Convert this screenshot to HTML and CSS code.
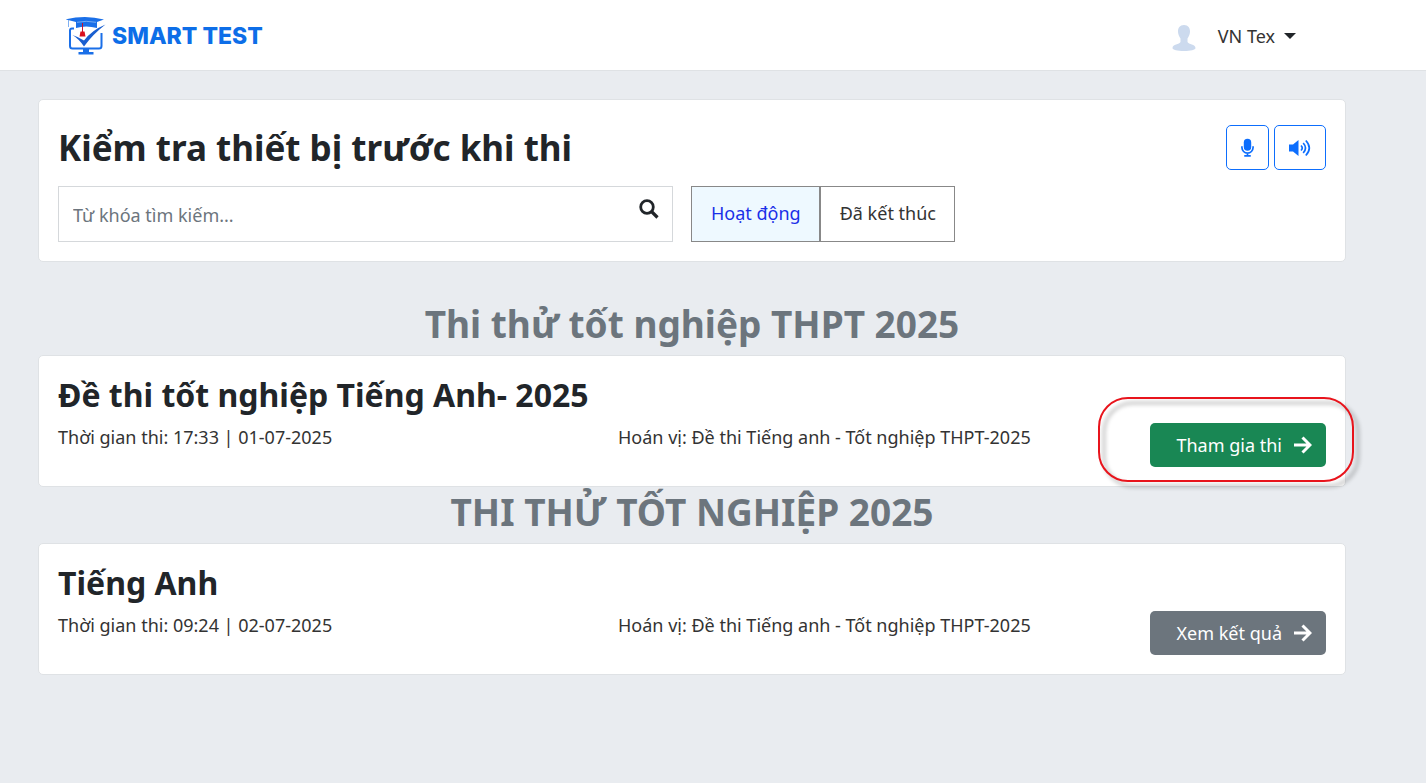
FILE: index.html
```
<!DOCTYPE html>
<html lang="vi">
<head>
<meta charset="UTF-8">
<meta name="viewport" content="width=device-width, initial-scale=1">
<title>Smart Test</title>
<link rel="stylesheet" href="styles.css">
</head>
<body>
<header class="topbar">
  <a class="brand" href="#">
    <svg class="brand-logo" viewBox="0 0 40 40" aria-hidden="true">
      <path d="M8 12.500H6Q4 12.500 4 14.500V30Q4 32.500 6.500 32.500H33Q35.500 32.500 35.500 30V17" fill="none" stroke="#1a6fe8" stroke-width="2"/>
      <path d="M17 33h6v3h4.500v2.500h-15V36H17z" fill="#1a6fe8"/>
      <path d="M-.5 3.500Q19-1.500 38 3.500L31 6v6q-11-3-21 0V6z" fill="#1a6fe8"/>
      <path d="M2.500 4v7" stroke="#7fb0f2" fill="none"/>
      <path d="M11 6.300q9-2 19 0" fill="none" stroke="#8fbcf5" stroke-width=".8"/>
      <path d="M6.500 19q6 2 11.500 5.500Q26 14 39.500 8.500 27 18 18 30.500 13 23 6.500 19z" fill="#1a5fd0"/>
      <path d="M16.500 7v9" stroke="#c8142c" fill="none"/>
      <path d="M14.500 15.500h4l1 5h-6z" fill="#d9101e"/>
    </svg>
    <span>SMART TEST</span>
  </a>
  <button class="user" type="button">
    <svg class="avatar" viewBox="0 0 24 28" aria-hidden="true">
      <path d="M12 1c4.200 0 6.200 3 6 7-.2 3-1.500 5-2.500 6.500V18c1 2.500 8 2 8 6 0 2-5 3-11.500 3S.5 26 .5 24c0-4 7-3.500 8-6v-3.500C7.500 13 6.200 11 6 8c-.2-4 1.800-7 6-7z" fill="#ccdaee"/>
    </svg>
    <span>VN Tex</span>
    <span class="caret"></span>
  </button>
</header>

<main class="page">
  <section class="card">
    <div class="check">
      <h1>Kiểm tra thiết bị trước khi thi</h1>
      <div class="devices">
        <button class="device" type="button" aria-label="Micro">
          <svg width="13" height="20" viewBox="0 0 14 20" aria-hidden="true">
            <rect x="3" y="0" width="8" height="13" rx="4" fill="currentColor"/>
            <path d="M1 8v1.500a6 6 0 0 0 12 0V8M7 15.500V18M3.500 18.500h7" fill="none" stroke="currentColor" stroke-width="1.800"/>
          </svg>
        </button>
        <button class="device" type="button" aria-label="Loa">
          <svg width="22" height="18" viewBox="0 0 22 18" aria-hidden="true">
            <path d="M0 5.500h4L9.500 1v16L4 12.500H0z" fill="currentColor"/>
            <path d="M12 6.500q2.500 2.500 0 5M14.200 4q4.600 5 0 10M16.800 1.500q7 7.500 0 15" fill="none" stroke="currentColor" stroke-width="1.700"/>
          </svg>
        </button>
      </div>
    </div>
    <form class="filters">
      <div class="search">
        <input type="text" placeholder="Từ khóa tìm kiếm..." aria-label="Từ khóa tìm kiếm">
        <button type="button" aria-label="Tìm">
          <svg width="20" height="20" viewBox="0 0 20 20" aria-hidden="true">
            <circle cx="8" cy="8" r="6.300" fill="none" stroke="currentColor" stroke-width="2.800"/>
            <path d="M12.500 12.500l6 6" stroke="currentColor" stroke-width="3.200"/>
          </svg>
        </button>
      </div>
      <div class="tabs">
        <button class="tab active" type="button">Hoạt động</button>
        <button class="tab" type="button">Đã kết thúc</button>
      </div>
    </form>
  </section>

  <h2 class="group-title first">Thi thử tốt nghiệp THPT 2025</h2>
  <section class="card">
    <h3>Đề thi tốt nghiệp Tiếng Anh- 2025</h3>
    <div class="exam">
      <p>Thời gian thi: 17:33 | 01-07-2025</p>
      <p>Hoán vị: Đề thi Tiếng anh - Tốt nghiệp THPT-2025</p>
      <div class="action">
        <button class="btn join" type="button">Tham gia thi
          <svg width="18" height="18" viewBox="0 0 18 18" aria-hidden="true">
            <path d="M0 9h16M8.500 1.500L16 9l-7.500 7.500" fill="none" stroke="currentColor" stroke-width="3"/>
          </svg>
        </button>
        <span class="highlight"></span>
      </div>
    </div>
  </section>

  <h2 class="group-title">THI THỬ TỐT NGHIỆP 2025</h2>
  <section class="card">
    <h3>Tiếng Anh</h3>
    <div class="exam">
      <p>Thời gian thi: 09:24 | 02-07-2025</p>
      <p>Hoán vị: Đề thi Tiếng anh - Tốt nghiệp THPT-2025</p>
      <div class="action">
        <button class="btn result" type="button">Xem kết quả
          <svg width="18" height="18" viewBox="0 0 18 18" aria-hidden="true">
            <path d="M0 9h16M8.500 1.500L16 9l-7.500 7.500" fill="none" stroke="currentColor" stroke-width="3"/>
          </svg>
        </button>
      </div>
    </div>
  </section>
</main>
</body>
</html>
```

FILE: styles.css
```
* {
  box-sizing: border-box;
}
body {
  margin: 0;
  background-color: #e9ecf0;
  color: #212529;
  font-family: "Segoe UI", "Noto Sans", sans-serif;
  font-size: 18px;
  line-height: 28px;
}
h1, h2, h3, p {
  margin: 0;
}
button, input {
  font: inherit;
  color: inherit;
}
button {
  cursor: pointer;
}
svg {
  display: block;
  flex: none;
}

/* top bar */
.topbar {
  display: flex;
  align-items: center;
  justify-content: space-between;
  height: 71px;
  padding: 2px 130px 0 66px;
  background-color: #fff;
  border-bottom: 1px solid #dfe2e5;
}
.brand {
  display: flex;
  align-items: center;
  gap: 6px;
  color: #0d6ee8;
  font-family: Inter, sans-serif;
  font-size: 23px;
  font-weight: 800;
  text-decoration: none;
}
.brand-logo {
  width: 40px;
  height: 40px;
}
.user {
  display: flex;
  align-items: center;
  padding: 0;
  border: 0;
  background: none;
  color: #333;
}
.avatar {
  width: 24px;
  height: 28px;
  margin: 4px 22px 0 0;
}
.caret {
  margin-left: 9px;
  border: 6px solid transparent;
  border-top-color: #212529;
  border-bottom: 0;
}

.page {
  margin: 28px 80px 40px 38px;
}
.card {
  padding: 19px;
  background-color: #fff;
  border: 1px solid #dfe2e5;
  border-radius: 5px;
}

/* device check */
.check {
  display: flex;
  align-items: center;
  justify-content: space-between;
  margin: 6px 0 16px;
}
h1 {
  font-size: 35px;
  line-height: 44px;
}
.devices {
  display: flex;
  gap: 5px;
}
.device {
  display: flex;
  align-items: center;
  height: 45px;
  padding: 0 14px;
  color: #0d6efd;
  background-color: #fff;
  border: 1px solid #0d6efd;
  border-radius: 5px;
}
.filters {
  display: flex;
  gap: 18px;
}
.search {
  display: flex;
  width: 615px;
  height: 56px;
  border: 1px solid #d5d8db;
}
.search input {
  flex: 1;
  min-width: 0;
  padding: 2px 14px 0;
  border: 0;
  outline: 0;
  background: none;
}
.search input::placeholder {
  color: #6c757d;
}
.search button {
  display: flex;
  align-items: flex-start;
  padding: 12px 13px;
  border: 0;
  background: none;
}
.tabs {
  display: flex;
}
.tab {
  padding: 0 18px 2px 19px;
  background-color: #fff;
  border: 1px solid #888;
  color: #333;
}
.tab.active {
  color: #1a30e8;
  background-color: #eef9ff;
}

/* exam list */
.group-title {
  padding: 3px 0 9px;
  color: #6c757d;
  font-size: 37px;
  line-height: 44px;
  text-align: center;
}
.group-title.first {
  margin-top: 37px;
}
h3 {
  margin-bottom: 8px;
  font-size: 32px;
  line-height: 40px;
}
.exam {
  display: grid;
  grid-template-columns: 53fr 49fr 18fr;
  color: #333;
}
.action {
  position: relative;
  display: flex;
  justify-content: flex-end;
}
.btn {
  display: flex;
  align-items: center;
  justify-content: flex-end;
  gap: 12px;
  width: 176px;
  height: 44px;
  padding: 0 14px;
  border: 0;
  border-radius: 5px;
  color: #fff;
  white-space: nowrap;
}
.join {
  background-color: #198754;
}
.result {
  background-color: #6c757d;
}
.highlight {
  position: absolute;
  top: -26px;
  right: -28px;
  width: 256px;
  height: 85px;
  border: 2px solid #e8141c;
  border-radius: 30px;
  filter: drop-shadow(5px 5px 2px rgba(0, 0, 0, 0.35));
  pointer-events: none;
}
```
